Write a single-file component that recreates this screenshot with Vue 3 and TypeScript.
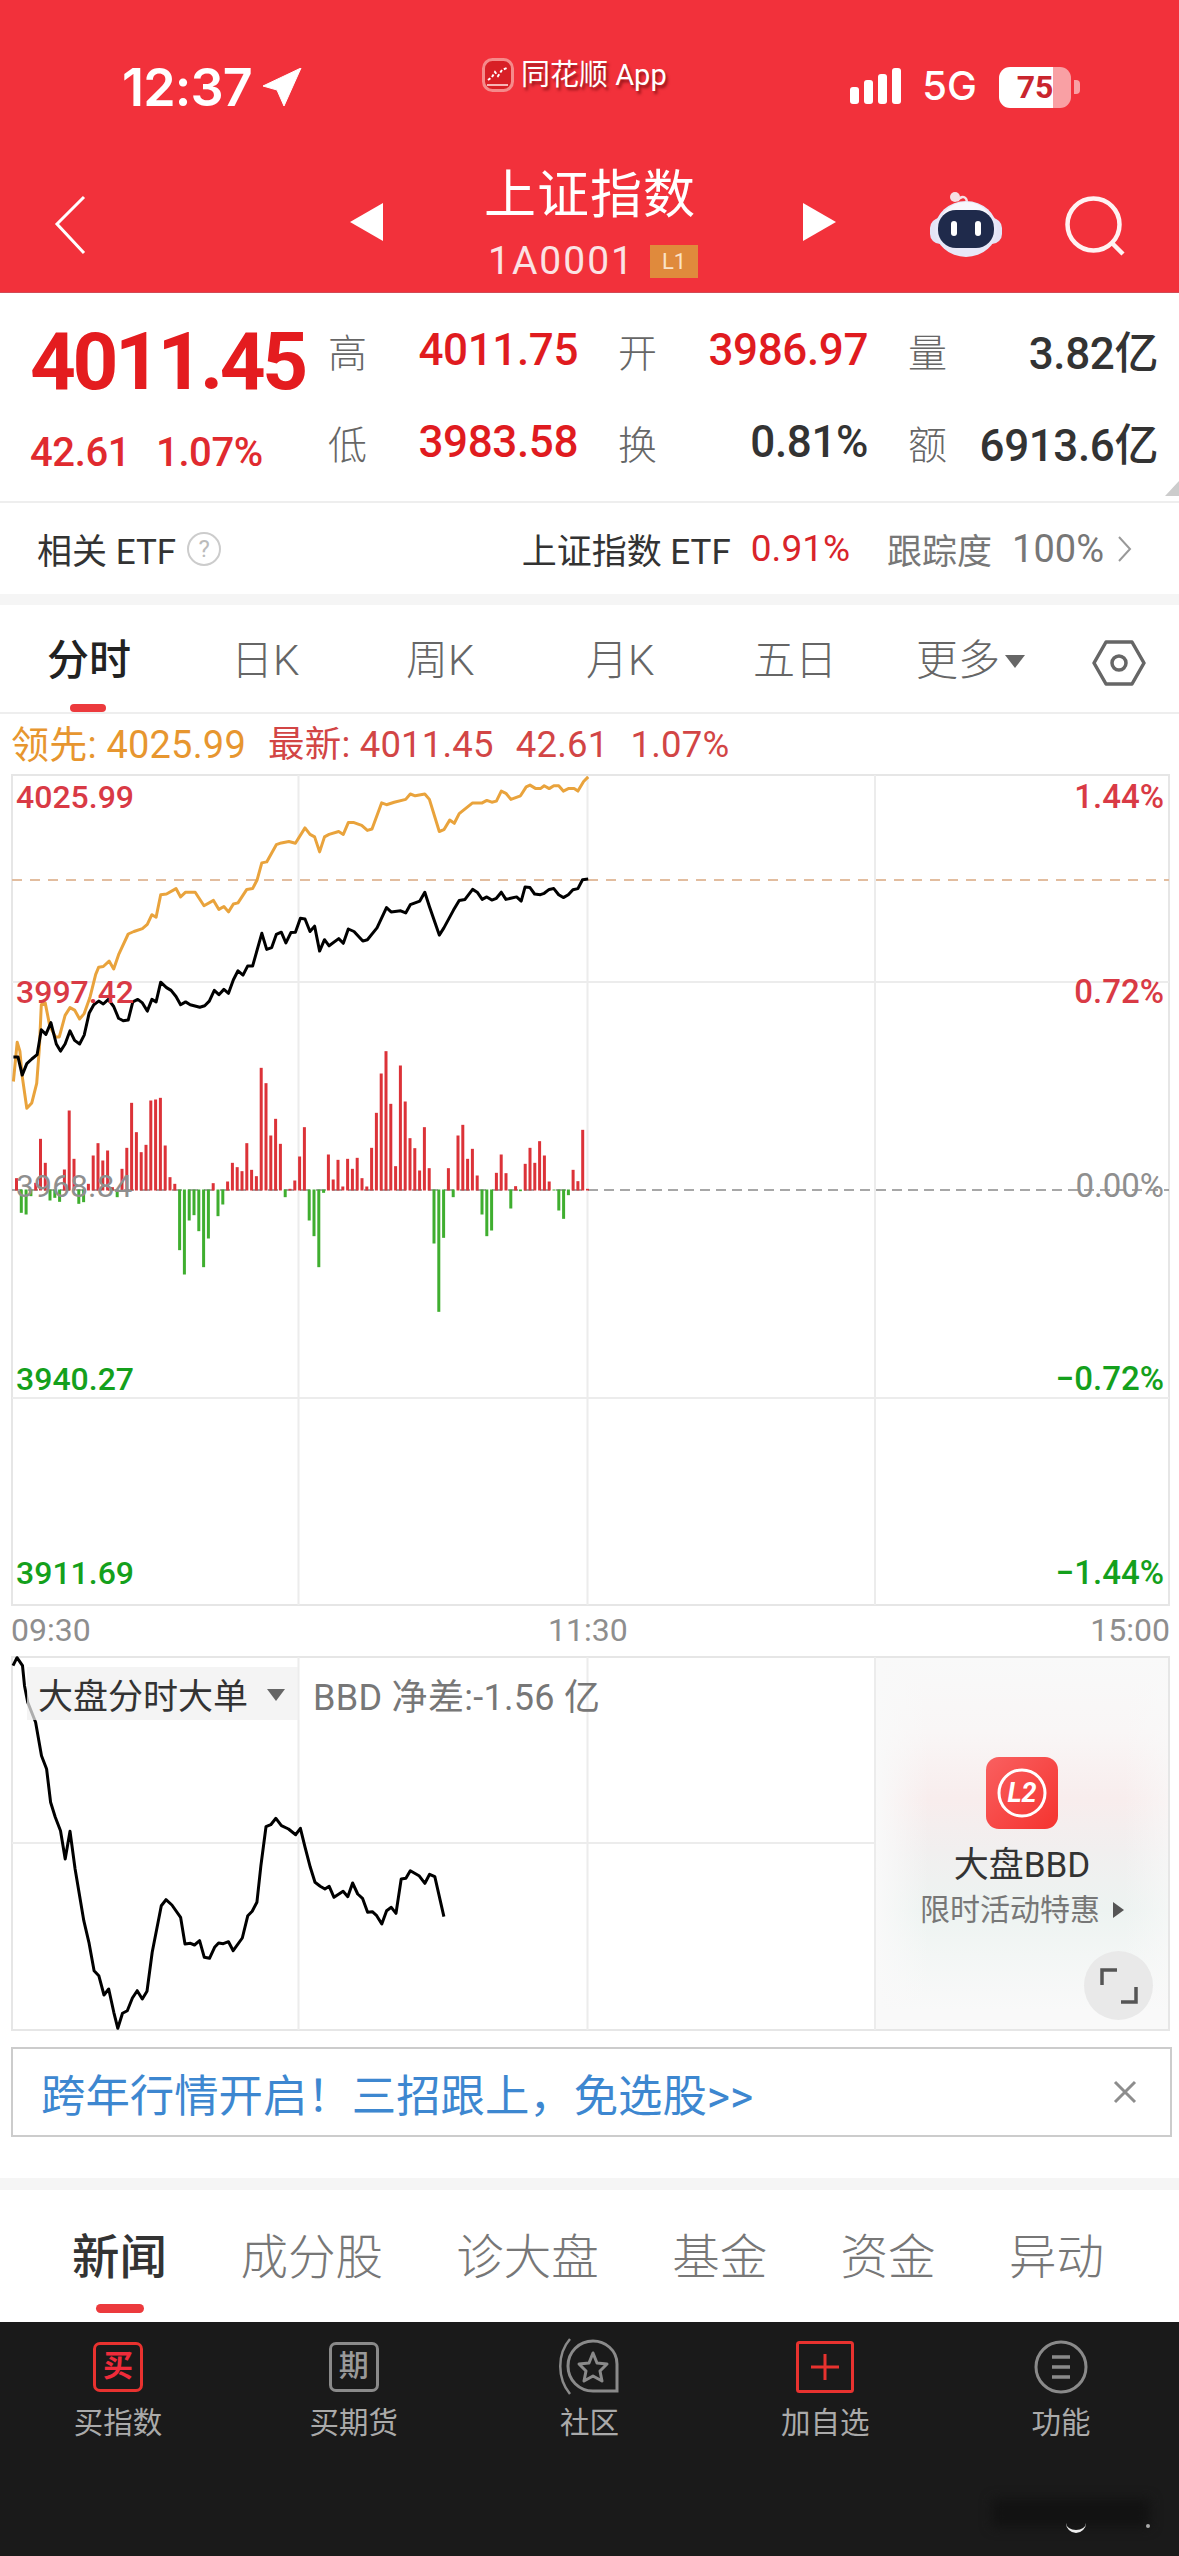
<template>
  <div class="page">
    <header class="head">
      <div class="status">
        <div class="status-left">
          <span class="clock">12:37</span>
          <svg class="loc" viewBox="0 0 40 38" width="40" height="38"><path d="M39 0 L1 18 L15 22 L22 38 Z" fill="#fff" stroke="#fff" stroke-width="1" stroke-linejoin="round" /></svg>
        </div>
        <div class="status-mid">
          <svg width="32" height="34" viewBox="0 0 32 34">
            <rect x="1.5" y="1.5" width="29" height="31" rx="9" fill="#d81f26" stroke="#f58a8a" stroke-width="3" />
            <path d="M6 22 L10 19 L13 14 L16 18 L20 12 L25 10" stroke="#fff" stroke-width="2" fill="none" stroke-dasharray="3 2" />
            <path d="M5 27 H26" stroke="#f7b5b5" stroke-width="2" />
          </svg>
          <span>同花顺 App</span>
        </div>
        <div class="status-right">
          <div class="signal"><i v-for="h in signal" :key="h" :style="{ height: h + 'px' }"></i></div>
          <span class="net">5G</span>
          <div class="battery"><span>75</span></div>
          <i class="nub"></i>
        </div>
      </div>
      <div class="nav">
        <svg class="back" width="32" height="60" viewBox="0 0 32 60"><path d="M30 2 L3 29 L30 58" fill="none" stroke="#fff" stroke-width="3" /></svg>
        <div class="stock">
          <i class="tri tri-left"></i>
          <div class="stock-name">
            <div class="title">上证指数</div>
            <div class="code">1A0001<b>L1</b></div>
          </div>
          <i class="tri tri-right"></i>
        </div>
        <svg class="robot" width="74" height="68" viewBox="0 0 74 68">
          <path d="M28 10 C33 3 38 6 38 12" fill="none" stroke="#f6dfe4" stroke-width="2.5" />
          <circle cx="26" cy="6" r="5" fill="#f6dfe4" />
          <rect x="1" y="27" width="72" height="26" rx="10" fill="#e4e4f6" />
          <ellipse cx="37" cy="38" rx="31" ry="28" fill="#e8e8f8" />
          <path d="M10 38 C10 22 22 11 37 11 C52 11 64 22 64 38" fill="#fff" opacity=".7" />
          <rect x="9" y="19" width="56" height="38" rx="18" fill="#1f2a4b" />
          <rect x="22" y="30" width="6" height="15" rx="3" fill="#fff" />
          <rect x="46" y="30" width="6" height="15" rx="3" fill="#fff" />
        </svg>
        <svg class="search" width="62" height="62" viewBox="0 0 62 62">
          <circle cx="28.5" cy="28.5" r="26" fill="none" stroke="#fff2f2" stroke-width="4.5" />
          <path d="M47 47 L58 58" stroke="#fff2f2" stroke-width="4.5" />
        </svg>
      </div>
    </header>

    <section class="quote">
      <div class="quote-main">
        <div class="price">4011.45</div>
        <div class="change"><span>42.61</span><span>1.07%</span></div>
      </div>
      <div class="quote-grid">
        <div v-for="c in quoteCells" :key="c.label" class="cell">
          <span class="cell-label">{{ c.label }}</span>
          <span class="cell-value" :class="{ up: c.up }">{{ c.value }}</span>
        </div>
      </div>
      <i class="corner"></i>
    </section>

    <section class="etf">
      <div class="etf-left">
        <span>相关 ETF</span>
        <i class="help">?</i>
      </div>
      <div class="etf-right">
        <span>上证指数 ETF</span>
        <span class="etf-rate">0.91%</span>
        <span class="muted">跟踪度</span>
        <span class="muted num">100%</span>
        <svg width="15" height="28" viewBox="0 0 15 28"><path d="M2 2 L13 14 L2 26" fill="none" stroke="#999" stroke-width="2" /></svg>
      </div>
    </section>

    <nav class="period">
      <span v-for="t in periods" :key="t.name" class="period-item" :class="{ active: t.active }" :style="{ left: t.x + 'px' }">{{ t.name }}</span>
      <i class="more-tri"></i>
      <svg class="hex" width="54" height="48" viewBox="0 0 54 48">
        <path d="M14 3 H40 L52 24 L40 45 H14 L2 24 Z" fill="none" stroke="#666" stroke-width="3.5" stroke-linejoin="round" />
        <circle cx="27" cy="24" r="7" fill="none" stroke="#666" stroke-width="3.5" />
      </svg>
      <i class="period-mark"></i>
    </nav>

    <div class="legend">
      <span class="lead">领先: 4025.99</span>
      <span class="latest">最新: 4011.45</span>
      <span class="latest">42.61</span>
      <span class="latest">1.07%</span>
    </div>

    <div class="chart">
      <svg width="1159" height="832" viewBox="11 775 1159 832">
        <rect x="12" y="776" width="1157" height="830" fill="none" stroke="#e6e6e6" stroke-width="2" />
        <path d="M298.5 776 V1606 M587.5 776 V1606 M875 776 V1606 M12 983 H1169 M12 1399 H1169" stroke="#ececec" stroke-width="2" fill="none" />
        <path d="M12 881 H1169" stroke="#e2bd9f" stroke-width="2" stroke-dasharray="10 8" fill="none" />
        <path d="M12 1191 H1169" stroke="#8a8a8a" stroke-width="1.5" stroke-dasharray="10 6" fill="none" />
        <rect v-for="b in bars" :key="b.x" :x="b.x" :y="b.y" width="3" :height="b.h" :fill="b.fill" />
        <polyline :points="orangeLine" fill="none" stroke="#e9a33c" stroke-width="3" stroke-linejoin="round" />
        <polyline :points="blackLine" fill="none" stroke="#000" stroke-width="3" stroke-linejoin="round" />
      </svg>
      <span v-for="l in axisLabels" :key="l.left" class="axis-row" :class="l.tone" :style="{ top: l.top + 'px' }">
        <span>{{ l.left }}</span><span class="axis-right">{{ l.right }}</span>
      </span>
    </div>

    <div class="times"><span>09:30</span><span class="t-mid">11:30</span><span>15:00</span></div>

    <div class="bbd">
      <svg width="1159" height="375" viewBox="11 1657 1159 375">
        <rect x="12" y="1658" width="1157" height="373" fill="none" stroke="#e6e6e6" stroke-width="2" />
        <path d="M298.5 1658 V2031 M587.5 1658 V2031 M875 1658 V2031 M12 1844 H875" stroke="#ececec" stroke-width="2" fill="none" />
        <polyline :points="bbdLine" fill="none" stroke="#000" stroke-width="3" stroke-linejoin="round" />
      </svg>
      <div class="bbd-head">
        <div class="bbd-select"><span>大盘分时大单</span><i></i></div>
        <span class="bbd-net">BBD 净差:-1.56 亿</span>
      </div>
      <div class="promo">
        <svg width="72" height="72" viewBox="0 0 72 72">
          <defs><linearGradient id="l2bg" x1="0" y1="0" x2="1" y2="1"><stop offset="0" stop-color="#f96060" /><stop offset="1" stop-color="#f5332f" /></linearGradient></defs>
          <rect width="72" height="72" rx="13" fill="url(#l2bg)" />
          <circle cx="36" cy="36" r="23" fill="none" stroke="#fff" stroke-width="3" />
          <text x="36" y="45" text-anchor="middle" class="l2">L2</text>
        </svg>
        <div class="promo-title">大盘BBD</div>
        <div class="promo-sub"><span>限时活动特惠</span><i></i></div>
        <div class="expand">
          <svg width="38" height="38" viewBox="0 0 38 38"><path d="M2 18 V3 H17 M36 20 V35 H21" fill="none" stroke="#555" stroke-width="3.5" /></svg>
        </div>
      </div>
    </div>

    <div class="banner">
      <span>跨年行情开启！三招跟上，免选股&gt;&gt;</span>
      <svg width="24" height="24" viewBox="0 0 24 24"><path d="M2 2 L22 22 M22 2 L2 22" stroke="#8d8d8d" stroke-width="3" /></svg>
    </div>

    <div class="band"></div>

    <nav class="news-tabs">
      <span v-for="t in newsTabs" :key="t" class="news-tab" :class="{ active: t === '新闻' }">{{ t }}</span>
      <i class="news-mark"></i>
    </nav>

    <footer class="foot">
      <div class="foot-item">
        <div class="foot-icon"><span class="boxed red-box">买</span></div>
        <span>买指数</span>
      </div>
      <div class="foot-item">
        <div class="foot-icon"><span class="boxed grey-box">期</span></div>
        <span>买期货</span>
      </div>
      <div class="foot-item">
        <div class="foot-icon">
          <svg width="62" height="58" viewBox="0 0 62 58">
            <path d="M12 1 C-1 16 -1 40 12 56" fill="none" stroke="#8a8a8a" stroke-width="2.5" />
            <path d="M35 3 C47 3 59 12 59 26 V53 H35 C21 53 10 42 10 28 C10 14 21 3 35 3 Z" fill="none" stroke="#8a8a8a" stroke-width="3" />
            <path d="M35 15 L39 25 L49 26 L42 33 L44 43 L35 38 L26 43 L28 33 L21 26 L31 25 Z" fill="none" stroke="#8a8a8a" stroke-width="3" stroke-linejoin="round" />
          </svg>
        </div>
        <span>社区</span>
      </div>
      <div class="foot-item">
        <div class="foot-icon">
          <svg width="58" height="52" viewBox="0 0 58 52">
            <rect x="1.5" y="1.5" width="55" height="49" rx="2" fill="none" stroke="#e8322f" stroke-width="3" />
            <path d="M29 13 V39 M15 26 H43" stroke="#e8322f" stroke-width="3" />
          </svg>
        </div>
        <span>加自选</span>
      </div>
      <div class="foot-item">
        <div class="foot-icon">
          <svg width="54" height="54" viewBox="0 0 54 54">
            <circle cx="27" cy="27" r="25" fill="none" stroke="#8a8a8a" stroke-width="3" />
            <path d="M18 17 H36 M18 27 H36 M18 37 H36" stroke="#8a8a8a" stroke-width="3.5" />
          </svg>
        </div>
        <span>功能</span>
      </div>
      <i class="smudge"></i>
      <i class="smudge-arc"></i>
      <i class="smudge-dot"></i>
    </footer>
  </div>
</template>

<script setup lang="ts">
const signal = [17, 24, 30, 36]

const quoteCells = [
  { label: '高', value: '4011.75', up: true },
  { label: '开', value: '3986.97', up: true },
  { label: '量', value: '3.82亿', up: false },
  { label: '低', value: '3983.58', up: true },
  { label: '换', value: '0.81%', up: false },
  { label: '额', value: '6913.6亿', up: false },
]

const periods = [
  { name: '分时', x: 47, active: true },
  { name: '日K', x: 231 },
  { name: '周K', x: 406 },
  { name: '月K', x: 586 },
  { name: '五日', x: 753 },
  { name: '更多', x: 916 },
]

const axisLabels = [
  { left: '4025.99', right: '1.44%', top: 1, tone: 'up' },
  { left: '3997.42', right: '0.72%', top: 196, tone: 'up' },
  { left: '3968.84', right: '0.00%', top: 390, tone: 'flat' },
  { left: '3940.27', right: '−0.72%', top: 583, tone: 'down' },
  { left: '3911.69', right: '−1.44%', top: 777, tone: 'down' },
]

const newsTabs = ['新闻', '成分股', '诊大盘', '基金', '资金', '异动']

// traced from the chart, in crop pixels; scaled back to page coordinates below
const orangeRaw = [35,875,45,765,52,790,58,860,70,950,83,935,96,880,103,780,108,660,118,655,130,720,145,750,155,750,170,690,183,668,195,675,208,700,220,685,235,640,250,575,258,555,270,553,285,538,297,560,310,520,335,462,350,455,372,447,385,435,397,408,408,415,420,352,435,350,460,335,472,358,485,345,510,345,533,383,558,368,572,393,585,385,597,400,610,378,622,375,645,337,660,335,672,310,684,263,697,260,722,212,735,207,755,203,772,208,797,165,810,183,822,190,835,232,848,190,860,183,885,175,897,183,910,150,925,150,945,158,960,172,972,168,997,95,1010,100,1030,93,1060,85,1072,70,1085,75,1110,70,1122,85,1148,175,1160,170,1175,143,1187,152,1200,125,1235,95,1260,95,1272,88,1285,93,1297,90,1310,62,1322,68,1335,85,1360,75,1375,50,1385,45,1400,55,1412,55,1422,47,1435,55,1447,47,1460,47,1472,62,1485,55,1500,55,1510,62,1525,35,1537,22]
const blackRaw = [35,806,47,806,58,857,70,825,83,812,97,800,108,730,120,743,133,710,147,770,158,790,170,770,183,733,195,760,208,770,220,745,233,683,245,660,258,650,270,658,283,645,297,665,310,698,322,705,335,703,347,652,360,645,372,655,385,678,397,645,408,652,420,597,435,612,447,620,460,637,472,660,485,652,497,660,522,667,535,663,547,650,560,620,572,632,585,617,597,628,610,590,622,565,635,577,647,552,660,552,684,460,697,505,710,500,722,463,735,457,747,487,760,458,772,457,785,418,797,420,810,455,822,440,835,510,848,478,860,495,885,475,897,488,910,448,925,455,948,482,960,478,985,445,1010,388,1022,400,1047,397,1060,403,1072,380,1097,370,1110,345,1122,385,1148,465,1160,445,1185,395,1200,368,1215,365,1235,337,1247,345,1260,365,1272,358,1285,367,1297,362,1310,345,1322,365,1350,358,1362,370,1372,330,1385,332,1397,350,1412,352,1422,348,1435,337,1447,335,1460,352,1472,360,1485,352,1497,338,1510,335,1522,310,1537,308]
const bbdRaw = [33,200,43,176,57,200,62,260,70,310,90,370,105,470,118,510,128,610,140,655,153,695,165,780,177,697,190,810,212,965,225,1030,238,1115,250,1130,263,1188,275,1170,288,1240,298,1288,310,1243,322,1235,335,1197,347,1175,360,1200,372,1177,385,1060,408,920,420,902,435,918,457,955,468,1035,482,1033,492,1038,505,1025,517,1075,530,1078,543,1045,553,1032,565,1034,578,1028,590,1055,613,1017,627,950,638,937,650,910,660,800,673,683,685,677,698,658,712,680,730,690,748,707,760,688,772,745,785,805,797,850,810,862,822,870,833,862,845,895,868,877,880,893,892,852,905,885,917,898,930,940,942,938,953,950,966,975,978,935,990,925,1002,943,1015,840,1027,838,1038,815,1060,830,1075,853,1087,826,1100,833,1123,953]

function toPoints(raw: number[], sx: number, sy: number, top: number): string {
  const out: string[] = []
  for (let i = 0; i < raw.length; i += 2) {
    out.push(`${(raw[i] / sx).toFixed(1)},${(top + raw[i + 1] / sy).toFixed(1)}`)
  }
  return out.join(' ')
}

const orangeLine = toPoints(orangeRaw, 2.613, 2.8, 770)
const blackLine = toPoints(blackRaw, 2.613, 2.8, 770)
const bbdLine = toPoints(bbdRaw, 2.53, 3, 1600)

const barValues = [37,-70,-75,-20,23,155,83,-33,-25,-37,63,240,95,-43,-38,20,105,142,90,120,10,-23,65,128,263,175,115,137,270,273,278,135,40,20,-182,-255,-93,-77,-125,-233,-147,22,-80,-45,27,83,70,58,142,62,43,368,322,165,215,140,-23,5,30,102,190,-93,-140,-233,-10,108,33,92,12,95,65,98,37,12,128,233,351,418,260,73,375,267,157,127,60,190,67,-162,-367,-145,67,-23,165,197,95,125,45,-75,-140,-123,53,108,52,-57,13,-5,80,128,83,148,105,27,-3,-63,-88,-17,62,28,182,5]

const bars = barValues.map((v, i) => {
  const h = Math.abs(v) / 3
  return {
    x: +((43 + i * 12.54) / 2.613 - 1.5).toFixed(1),
    y: v > 0 ? 1191.5 - h : 1190.5,
    h,
    fill: v > 0 ? '#dc3238' : '#3fae2f',
  }
})
</script>

<style>
html, body { margin: 0; background: #fff; }
</style>

<style scoped>
.page {
  width: 1179px;
  height: 2556px;
  display: flex;
  flex-direction: column;
  overflow: hidden;
  background: #fff;
  font-family: Roboto, "Noto Sans CJK SC", sans-serif;
  color: #333;
}
i { display: block; font-style: normal; }

.head { height: 293px; background: #f2313b; color: #fff; flex: none; padding-top: 57px; box-sizing: border-box; border-bottom: 1px solid #d24a55; }
.status { height: 52px; display: flex; justify-content: space-between; position: relative; padding: 0 99px 0 122px; }
.status-left { display: flex; align-items: flex-start; gap: 10px; padding-top: 11px; }
.clock { font-family: Inter, sans-serif; font-weight: 600; font-size: 52px; line-height: 40px; letter-spacing: -.8px; }
.status-mid { position: absolute; left: 482px; top: 1px; display: flex; align-items: center; gap: 7px; font-size: 29px; line-height: 34px; text-shadow: 2px 3px 3px rgba(80, 0, 0, .6); }
.status-right { display: flex; align-items: flex-start; padding-top: 10px; }
.signal { display: flex; align-items: flex-end; gap: 5px; height: 37px; margin-right: 21px; }
.signal i { width: 9px; background: #fff; border-radius: 3px; }
.net { font-family: Inter, sans-serif; font-size: 40px; line-height: 38px; margin-right: 22px; font-weight: 500; }
.battery { width: 72px; height: 41px; border-radius: 11px; background: linear-gradient(90deg, #fff 75%, #f9a0a4 75%); color: #c9252e; font-weight: 700; font-size: 32px; line-height: 41px; text-align: center; }
.nub { width: 6px; height: 14px; background: #f9a0a4; border-radius: 0 4px 4px 0; margin: 13px 0 0 3px; }

.nav { position: relative; height: 122px; margin-top: 59px; display: flex; }
.back { position: absolute; left: 54px; top: 27px; }
.stock { position: absolute; left: 350px; top: 0; width: 486px; display: flex; justify-content: space-between; align-items: flex-start; }
.tri { width: 0; height: 0; margin-top: 35px; border-top: 19px solid transparent; border-bottom: 19px solid transparent; }
.tri-left { border-right: 33px solid #fff; }
.tri-right { border-left: 33px solid #fff; }
.stock-name { text-align: center; flex: none; width: 220px; margin-right: 6px; }
.title { font-size: 52px; line-height: 58px; margin-top: -1px; letter-spacing: 1px; }
.code { display: flex; justify-content: center; align-items: center; gap: 15px; font-size: 39px; line-height: 36px; height: 36px; margin: 18px 0 0 6px; color: #fbe3e4; letter-spacing: 2px; }
.code b { background: #e08a3c; font-weight: 400; font-size: 22px; line-height: 33px; width: 48px; letter-spacing: 0; color: #fbe3c8; }
.robot { position: absolute; left: 929px; top: 23px; }
.search { position: absolute; left: 1065px; top: 28px; }

.quote { position: relative; height: 210px; flex: none; display: flex; box-sizing: border-box; border-bottom: 2px solid #eee; }
.quote-main { width: 328px; padding-left: 30px; box-sizing: border-box; }
.price { font-size: 80px; line-height: 80px; margin-top: 29px; font-weight: 700; color: #e41c1f; letter-spacing: -3.4px; }
.change { display: flex; gap: 26px; margin-top: 31px; font-size: 40px; line-height: 40px; font-weight: 500; color: #e02a2f; letter-spacing: -.4px; }
.quote-grid { display: grid; grid-template-columns: repeat(3, 250px); column-gap: 40px; grid-auto-rows: 92px; padding-top: 11px; }
.cell { display: flex; justify-content: space-between; align-items: center; }
.cell-label { font-size: 39px; color: #666; font-weight: 300; }
.cell-value { font-size: 44px; font-weight: 500; color: #333; letter-spacing: -.4px; }
.cell-value.up { color: #e01b1f; }
.corner { position: absolute; right: 0; bottom: 5px; width: 0; height: 0; border-left: 14px solid transparent; border-bottom: 15px solid #ccc; }

.etf { height: 91px; flex: none; display: flex; justify-content: space-between; align-items: center; padding: 0 47px 0 37px; font-size: 35px; color: #333; border-bottom: 11px solid #f5f5f5; }
.etf-left { display: flex; align-items: center; gap: 11px; }
.help { width: 30px; height: 30px; border: 2px solid #ccc; border-radius: 50%; color: #bbb; font-size: 24px; line-height: 30px; text-align: center; }
.etf-right { display: flex; align-items: center; gap: 20px; }
.etf-rate { color: #d9242a; margin-right: 17px; font-size: 37px; }
.muted { color: #777; }
.muted.num { font-size: 38px; }
.etf-right svg { margin-left: -7px; }

.period { position: relative; height: 109px; flex: none; border-bottom: 2px solid #eee; box-sizing: border-box; }
.period-item { position: absolute; top: 28px; font-size: 42px; line-height: 56px; color: #666; font-weight: 300; }
.period-item.active { color: #222; font-weight: 500; }
.more-tri { position: absolute; left: 1005px; top: 50px; border-left: 10px solid transparent; border-right: 10px solid transparent; border-top: 13px solid #666; }
.hex { position: absolute; left: 1092px; top: 34px; }
.period-mark { position: absolute; left: 70px; bottom: 0; width: 36px; height: 8px; border-radius: 4px; background: #ec3a3d; }

.legend { height: 60px; flex: none; display: flex; padding: 11px 0 0 11px; box-sizing: border-box; font-size: 38px; line-height: 40px; gap: 22px; letter-spacing: .2px; }
.legend .lead { color: #e7962f; }
.legend .latest { color: #d24545; font-size: 36.5px; }

.chart { position: relative; height: 832px; margin-left: 11px; width: 1159px; flex: none; }
.chart svg, .bbd svg { display: block; }
.axis-row { position: absolute; left: 5px; right: 6px; display: flex; justify-content: space-between; font-size: 32px; line-height: 44px; font-weight: 500; }
.axis-right { font-size: 33px; }
.axis-row.up { color: #d93a45; }
.axis-row.flat { color: #8f8f8f; font-weight: 400; }
.axis-row.down { color: #14a01c; }

.times { height: 50px; flex: none; display: flex; justify-content: space-between; align-items: center; padding: 0 9px 2px 11px; box-sizing: border-box; font-size: 32px; color: #8e8e8e; position: relative; }
.t-mid { position: absolute; left: 548px; }

.bbd { position: relative; height: 375px; width: 1159px; margin-left: 11px; flex: none; }
.bbd-head { position: absolute; left: 16px; top: 11px; display: flex; align-items: center; gap: 15px; }
.bbd-select { width: 271px; height: 53px; background: rgba(240, 240, 240, .72); display: flex; align-items: center; justify-content: space-between; padding: 0 13px 0 11px; box-sizing: border-box; font-size: 35px; color: #333; }
.bbd-select i { border-left: 9px solid transparent; border-right: 9px solid transparent; border-top: 12px solid #666; margin-top: 2px; }
.bbd-net { font-size: 36px; color: #777; letter-spacing: .3px; }
.promo {
  position: absolute;
  left: 865px;
  top: 2px;
  right: 2px;
  bottom: 2px;
  padding-top: 99px;
  display: flex;
  flex-direction: column;
  align-items: center;
  background:
    linear-gradient(90deg, #f9f9f9, rgba(249, 249, 249, 0) 18%, rgba(249, 249, 249, 0) 85%, rgba(249, 249, 249, .6)),
    linear-gradient(180deg, #f9f9f9 0, #f9f6f6 20%, #f8eded 38%, #f1efef 52%, #edf3f1 68%, #f3f6f5 80%, #f9f9f9 95%);
}
.l2 { font-family: Roboto, sans-serif; font-size: 27px; font-weight: 700; font-style: italic; fill: #fff; }
.promo-title { font-size: 35px; line-height: 40px; color: #333; margin-top: 17px; }
.promo-sub { display: flex; align-items: center; gap: 13px; font-size: 30px; line-height: 40px; color: #777; margin-top: 4px; }
.promo-sub i { border-top: 8px solid transparent; border-bottom: 8px solid transparent; border-left: 11px solid #555; }
.expand { position: absolute; right: 15px; bottom: 9px; width: 69px; height: 69px; border-radius: 50%; background: #e9e9e9; display: flex; align-items: center; justify-content: center; }

.banner { margin: 16px 0 0 11px; width: 1161px; height: 90px; box-sizing: border-box; border: 2px solid #ccc; flex: none; display: flex; align-items: center; justify-content: space-between; padding: 0 33px 0 28px; color: #3d87d0; font-size: 44.4px; }
.band { height: 12px; margin-top: 41px; background: #f5f5f5; flex: none; }

.news-tabs { position: relative; height: 132px; flex: none; display: flex; justify-content: space-between; padding: 35px 75px 0 72px; box-sizing: border-box; }
.news-tab { font-size: 47.5px; line-height: 66px; color: #777; font-weight: 300; }
.news-tab.active { color: #333; font-weight: 500; }
.news-mark { position: absolute; left: 96px; bottom: 9px; width: 48px; height: 9px; border-radius: 4.5px; background: #ec3a3d; }

.foot { position: relative; flex: 1; background: #1a1a1a; display: grid; grid-template-columns: repeat(5, 1fr); align-items: start; padding-top: 17px; color: #aaa; font-size: 29.5px; }
.foot-item { display: flex; flex-direction: column; align-items: center; }
.foot-item > span { line-height: 40px; margin-top: 8px; }
.foot-icon { height: 56px; display: flex; align-items: center; justify-content: center; }
.boxed { width: 50px; height: 50px; box-sizing: border-box; border: 3px solid; border-radius: 7px; font-size: 30px; line-height: 42px; text-align: center; }
.red-box { border-color: #e8322f; color: #ef2b3a; font-weight: 700; }
.grey-box { border-color: #8a8a8a; color: #999; font-weight: 500; }
.smudge { position: absolute; left: 992px; top: 177px; width: 158px; height: 28px; background: #121212; filter: blur(6px); }
.smudge-arc { position: absolute; left: 1066px; top: 196px; width: 20px; height: 12px; border-bottom: 3px solid #eee; border-radius: 0 0 12px 12px; filter: blur(.6px); }
.smudge-dot { position: absolute; left: 1146px; top: 202px; width: 4px; height: 4px; border-radius: 50%; background: #aaa; }
</style>
